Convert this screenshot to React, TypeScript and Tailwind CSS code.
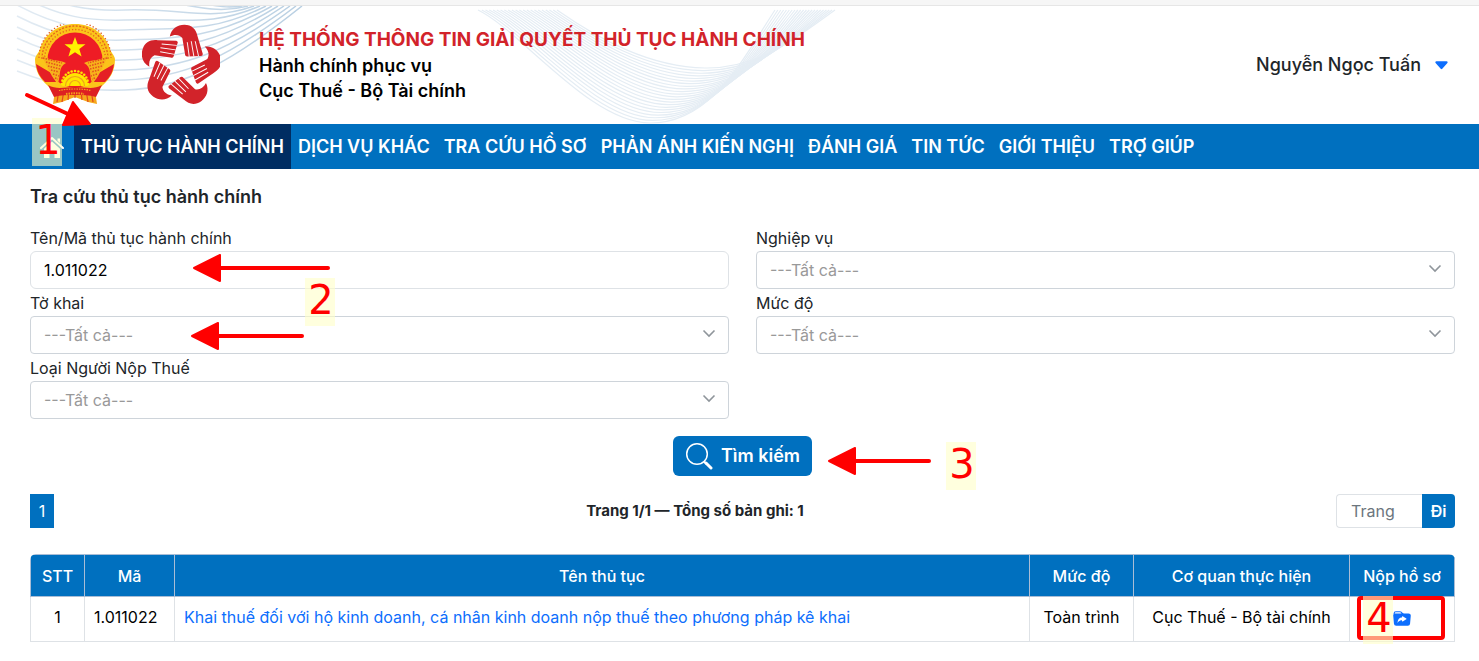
import type { ReactNode } from "react";
import { BsCaretDownFill, BsFolderSymlinkFill } from "react-icons/bs";

const menu = [
  "DỊCH VỤ KHÁC",
  "TRA CỨU HỒ SƠ",
  "PHẢN ÁNH KIẾN NGHỊ",
  "ĐÁNH GIÁ",
  "TIN TỨC",
  "GIỚI THIỆU",
  "TRỢ GIÚP",
];

const lerp = (a: number, b: number, t: number) => a + (b - a) * t;

function HeaderWaves() {
  const upper = [557, 4, 600, 34, 650, 61, 705, 62, 760, 63, 800, 29, 835, 4];
  const lower = [478, 4, 520, 24, 590, 117, 650, 117, 710, 117, 740, 58, 775, 4];
  const right = Array.from({ length: 22 }, (_, i) => {
    const p = upper.map((v, k) => lerp(v, lower[k], i / 21));
    return `M${p[0]} ${p[1]}C${p.slice(2, 8).join(" ")}C${p.slice(8).join(" ")}`;
  });
  const left = Array.from({ length: 12 }, (_, i) => {
    const d = 10 * i;
    return `M17 ${65 - 11 * i}C60 ${82 - d} 90 ${85 - d} 125 ${84 - d}C185 ${82 - d} ${232 - 3 * i} ${56 - 5 * i} ${302 - 6 * i} 0`;
  });
  return (
    <svg
      className="absolute left-0 top-0"
      width="860"
      height="118"
      viewBox="0 0 860 118"
      fill="none"
      aria-hidden="true"
    >
      <defs>
        <linearGradient id="fade" x1="17" x2="302" y1="0" y2="0" gradientUnits="userSpaceOnUse">
          <stop offset="0" stopColor="#e2ebf3" />
          <stop offset="1" stopColor="#b8cfe2" />
        </linearGradient>
      </defs>
      {left.map((d) => (
        <path key={d} d={d} stroke="url(#fade)" strokeWidth="1.5" />
      ))}
      {right.map((d) => (
        <path key={d} d={d} stroke="#e5edf4" strokeWidth="1.2" />
      ))}
    </svg>
  );
}

function Emblem() {
  const rays = Array.from({ length: 13 }, (_, i) => (i * Math.PI) / 12);
  return (
    <svg width="80" height="82" viewBox="0 0 80 82" role="img" aria-label="Quốc huy">
      {/* Ribbon tails */}
      <path d="M21 60h38l3 20-9-2-13-5-13 5-9 2z" fill="#f6a81c" />
      <path d="M24 66l-2 12M29 66l-2 12M34 66l-1 10M40 66v8M46 66l1 10M51 66l2 12M56 66l2 12" stroke="#e2451c" strokeWidth="1.2" />
      {/* Wreath */}
      <path
        d="M40 0C57 0 70 10 75 25C76 29 79 30 80 35C80 47 75 55 67 62C60 69 51 71 40 71C29 71 20 69 13 62C5 55 0 47 0 35C1 30 4 29 5 25C10 10 23 0 40 0Z"
        fill="#fbc41a"
      />
      <path d="M9.500 36A30.500 30.500 0 0 1 70.500 36" fill="none" stroke="#e5601d" strokeWidth="1.300" strokeDasharray="1.200 2" />
      <path d="M7 35A33 33 0 0 1 73 35" fill="none" stroke="#e5601d" strokeWidth="1.300" strokeDasharray="2 1.500" />
      <path d="M4 34A36 36 0 0 1 76 34" fill="none" stroke="#e5601d" strokeWidth="1.300" strokeDasharray="1.400 2" />
      {/* Field */}
      <circle cx="40" cy="36" r="27.500" fill="#ee1c25" />
      <path d="M1 40l17 10 3 8-11 0C5 53 2 48 1 40zM79 40L62 50l-3 8 11 0c5-5 8-10 9-18z" fill="#e51f25" />
      {/* Rice sheaves */}
      <path d="M6 30c8 8 17 5 25 9-8 4-5 12-8 20-6-4-9-13-17-29zM74 30c-8 8-17 5-25 9 8 4 5 12 8 20 6-4 9-13 17-29z" fill="#f7b21b" />
      <path
        d="M8 34l19 5M11 38l15 4M13 42l12 3M16 46l8 2M18 50l6 2M20 54l3 1M72 34l-19 5M69 38l-15 4M67 42l-12 3M64 46l-8 2M62 50l-6 2M60 54l-3 1"
        stroke="#e2501d"
        strokeWidth="1.500"
        strokeDasharray="1.500 1.200"
      />
      <path d="M40 13l2.700 7.300h7.800l-6.200 4.800 2.300 7.500L40 28.200l-6.600 4.400 2.300-7.500-6.200-4.800h7.800z" fill="#fff200" />
      {/* Gear */}
      <path d="M27 62a13 13 0 0 1 26 0z" fill="#ffe600" />
      {rays.map((a) => (
        <circle key={a} cx={40 + 13 * Math.cos(a)} cy={60 - 13 * Math.sin(a)} r="1.300" fill="#ffe600" />
      ))}
      <path d="M30.500 62a9.500 9.500 0 0 1 19 0M34.500 62a5.500 5.500 0 0 1 11 0" fill="none" stroke="#f0a01c" strokeWidth="1.200" />
      {/* Ribbon */}
      <path d="M13 61c9 5 16 2 27 2s18 3 27-2l-6 12c-7-2-13-2-21-2s-14 0-21 2z" fill="#dd1f22" />
      <path d="M24 66.500c9-2 23-2 32 0" fill="none" stroke="#f6a01c" strokeWidth="1.200" strokeDasharray="1.500 1" />
      <path d="M31 70c6-1 12-1 18 0" fill="none" stroke="#f6a01c" strokeWidth="2" strokeDasharray="1.500 1" />
    </svg>
  );
}

function HandsLogo() {
  return (
    <svg width="78" height="82" viewBox="19 13 236 248" role="img" aria-label="Dịch vụ công">
      {[0, 72, 144, 216, 288].map((angle) => (
        <g key={angle} transform={`rotate(${angle} 135 139)`}>
          <path
            d="M103 51C107 28 126 15 147 15C170 15 183 29 187 50L203 104Q203 111 196 110L156 111Q149 111 149 103L141 55C132 45 118 43 103 51Z"
            fill="#d2232a"
          />
          <path d="M156 68l6 44M168 65l8 46M180 65l10 45" stroke="#fff" strokeWidth="2.800" />
        </g>
      ))}
    </svg>
  );
}

function HomeIcon() {
  return (
    <svg width="24" height="24" viewBox="0 0 24 24" fill="none" aria-hidden="true">
      <path d="M1 13L12 3l11 10" stroke="#fff" strokeWidth="2" strokeLinecap="round" strokeLinejoin="round" />
      <path d="M12 6.500l8 7.300V23h-5.500v-6h-5v6H4v-9.200z" fill="#fff" />
      <path d="M17.500 3.500H20V8l-2.500-2.300z" fill="#fff" />
    </svg>
  );
}

function Chevron() {
  return (
    <svg
      className="pointer-events-none absolute right-[13px] top-3"
      width="14"
      height="12"
      viewBox="0 0 14 12"
      fill="none"
      aria-hidden="true"
    >
      <path d="M1.500 2.500L7 8l5.500-5.500" stroke="#8f959b" strokeWidth="1.600" />
    </svg>
  );
}

function SelectField({ id, label }: { id: string; label: string }) {
  return (
    <div>
      <label htmlFor={id} className="mb-px block leading-6">
        {label}
      </label>
      <div className="relative">
        <select
          id={id}
          className="block h-[38px] w-full appearance-none rounded border border-[#ced4da] bg-white px-[13px] text-[#999999]"
        >
          <option>---Tất cả---</option>
        </select>
        <Chevron />
      </div>
    </div>
  );
}

// Yellow step number of the walkthrough
function Step({ className, children }: { className: string; children: ReactNode }) {
  return (
    <span
      className={`absolute z-10 flex h-12 w-[30px] justify-center bg-[#ffffc8]/60 pl-0.5 font-['DejaVu_Sans',sans-serif] text-[40px] font-normal leading-[44px] text-[#ff0000] ${className}`}
    >
      {children}
    </span>
  );
}

function Arrow({ className, length }: { className: string; length: number }) {
  return (
    <svg
      className={`pointer-events-none absolute z-10 ${className}`}
      width={length}
      height="28"
      viewBox={`0 0 ${length} 28`}
      aria-hidden="true"
    >
      <path d={`M20 14H${length - 2}`} stroke="#ff0000" strokeWidth="4" strokeLinecap="round" />
      <path d="M1 14L27 1v26z" fill="#ff0000" stroke="#ff0000" strokeWidth="2" strokeLinejoin="round" />
    </svg>
  );
}

export default function App() {
  return (
    <div className="min-h-screen bg-white font-[Inter,'Liberation_Sans',sans-serif] text-base text-[#212529]">
      <div className="h-[6px] border-b border-[#e6e6e6] bg-[#f6f6f6]" />

      {/* Header */}
      <header className="relative flex h-[118px] items-center pl-[35px] pr-[29px]">
        <HeaderWaves />
        <div className="relative flex items-center gap-[27px]">
          <Emblem />
          <HandsLogo />
        </div>
        <div className="relative ml-[39px] text-lg font-semibold leading-[25px] text-black">
          <h1 className="text-[19px] font-bold leading-[26px] text-[#d2232a]">
            HỆ THỐNG THÔNG TIN GIẢI QUYẾT THỦ TỤC HÀNH CHÍNH
          </h1>
          <p>Hành chính phục vụ</p>
          <p>Cục Thuế - Bộ Tài chính</p>
        </div>
        <button type="button" className="relative ml-auto flex items-center gap-3 text-lg font-medium">
          Nguyễn Ngọc Tuấn
          <BsCaretDownFill className="size-[17px] text-[#0d6efd]" />
        </button>
      </header>

      {/* Navigation */}
      <nav className="relative flex h-[45px] bg-[#0070bf] pl-[30px] text-lg font-semibold text-white">
        <a href="#" aria-label="Trang chủ" className="flex w-11 items-center justify-center">
          <HomeIcon />
        </a>
        <a href="#" className="flex items-center bg-[#002d62] px-[7px]">
          THỦ TỤC HÀNH CHÍNH
        </a>
        {menu.map((item) => (
          <a key={item} href="#" className="flex items-center px-[7px]">
            {item}
          </a>
        ))}
        <Step className="-top-1.5 left-8">1</Step>
        <svg
          className="pointer-events-none absolute -top-8 left-6 z-10"
          width="70"
          height="36"
          viewBox="0 0 70 36"
          aria-hidden="true"
        >
          <path d="M3 3L44 22" stroke="#ff0000" strokeWidth="4" strokeLinecap="round" />
          <path d="M49 10L66 32L39 33z" fill="#ff0000" stroke="#ff0000" strokeWidth="2" strokeLinejoin="round" />
        </svg>
      </nav>

      <main className="pl-[30px] pr-6 pt-4">
        <h2 className="text-lg font-semibold leading-6">Tra cứu thủ tục hành chính</h2>

        {/* Search form */}
        <form className="relative mt-[17px]">
          <div className="grid grid-cols-2 gap-x-[27px] gap-y-0.5">
            <div>
              <label htmlFor="ten" className="mb-px block leading-6">
                Tên/Mã thủ tục hành chính
              </label>
              <input
                id="ten"
                type="text"
                defaultValue="1.011022"
                className="block h-[38px] w-full rounded-md border border-[#dee2e6] px-[13px] text-black"
              />
            </div>
            <SelectField id="nghiep-vu" label="Nghiệp vụ" />
            <SelectField id="to-khai" label="Tờ khai" />
            <SelectField id="muc-do" label="Mức độ" />
            <SelectField id="loai-nnt" label="Loại Người Nộp Thuế" />
          </div>
          <div className="mt-[17px] flex justify-center">
            <div className="relative">
              <button
                type="button"
                className="flex h-10 items-center gap-2 rounded-md bg-[#0070bf] px-3 text-lg font-semibold text-white"
              >
                <svg width="28" height="28" viewBox="0 0 28 28" fill="none" stroke="#fff" aria-hidden="true">
                  <circle cx="12" cy="12" r="10.300" strokeWidth="1.500" />
                  <path d="M19 19.500l3 3" strokeWidth="2" />
                  <path d="M21 21l5 5" strokeWidth="3" strokeLinecap="round" />
                </svg>
                Tìm kiếm
              </button>
              <Arrow className="left-full top-[11px] ml-4" length={103} />
              <Step className="left-full top-1.5 ml-[134px]">3</Step>
            </div>
          </div>
          <Arrow className="left-[163px] top-7" length={137} />
          <Arrow className="left-[161px] top-24" length={113} />
          <Step className="left-[275px] top-[52px]">2</Step>
        </form>

        {/* Pagination */}
        <div className="mt-[18px] flex items-center justify-between">
          <button type="button" className="h-[34px] w-6 bg-[#0070bf] text-white">
            1
          </button>
          <p className="text-[15px] font-bold">Trang 1/1 — Tổng số bản ghi: 1</p>
          <form className="flex h-[34px]">
            <input
              type="text"
              aria-label="Trang"
              placeholder="Trang"
              className="w-[86px] rounded-l border border-r-0 border-[#dee2e6] px-[14px] placeholder:text-[#6c757d]"
            />
            <button type="button" className="w-[33px] rounded-r bg-[#0070bf] font-semibold text-white">
              Đi
            </button>
          </form>
        </div>

        {/* Results */}
        <div className="relative mt-[26px]">
          <div className="overflow-hidden rounded-t-md">
            <table className="w-full table-fixed border-collapse text-center text-black">
              <thead>
                <tr className="h-[42px] bg-[#0070bf] text-white *:border *:border-[#a9bdd6] *:font-medium">
                  <th className="w-[54px]">STT</th>
                  <th className="w-[90px]">Mã</th>
                  <th>Tên thủ tục</th>
                  <th className="w-[104px]">Mức độ</th>
                  <th className="w-[216px]">Cơ quan thực hiện</th>
                  <th className="w-[105px]">Nộp hồ sơ</th>
                </tr>
              </thead>
              <tbody>
                <tr className="h-[45px] *:border *:border-[#dee2e6] *:pt-2 *:align-top">
                  <td>1</td>
                  <td className="px-[9px] text-left">1.011022</td>
                  <td className="px-[9px] text-left">
                    <a href="#" className="text-[#0d6efd]">
                      Khai thuế đối với hộ kinh doanh, cá nhân kinh doanh nộp thuế theo phương pháp kê khai
                    </a>
                  </td>
                  <td>Toàn trình</td>
                  <td>Cục Thuế - Bộ tài chính</td>
                  <td>
                    <a href="#" aria-label="Nộp hồ sơ" className="inline-block align-middle">
                      <BsFolderSymlinkFill className="size-[18px] text-[#0d6efd]" />
                    </a>
                  </td>
                </tr>
              </tbody>
            </table>
          </div>
          <div className="absolute right-[10px] top-[42px] h-11 w-[88px] rounded-sm border-4 border-[#ff0000]" />
          <Step className="right-[62px] top-[42px]">4</Step>
        </div>
      </main>
    </div>
  );
}
